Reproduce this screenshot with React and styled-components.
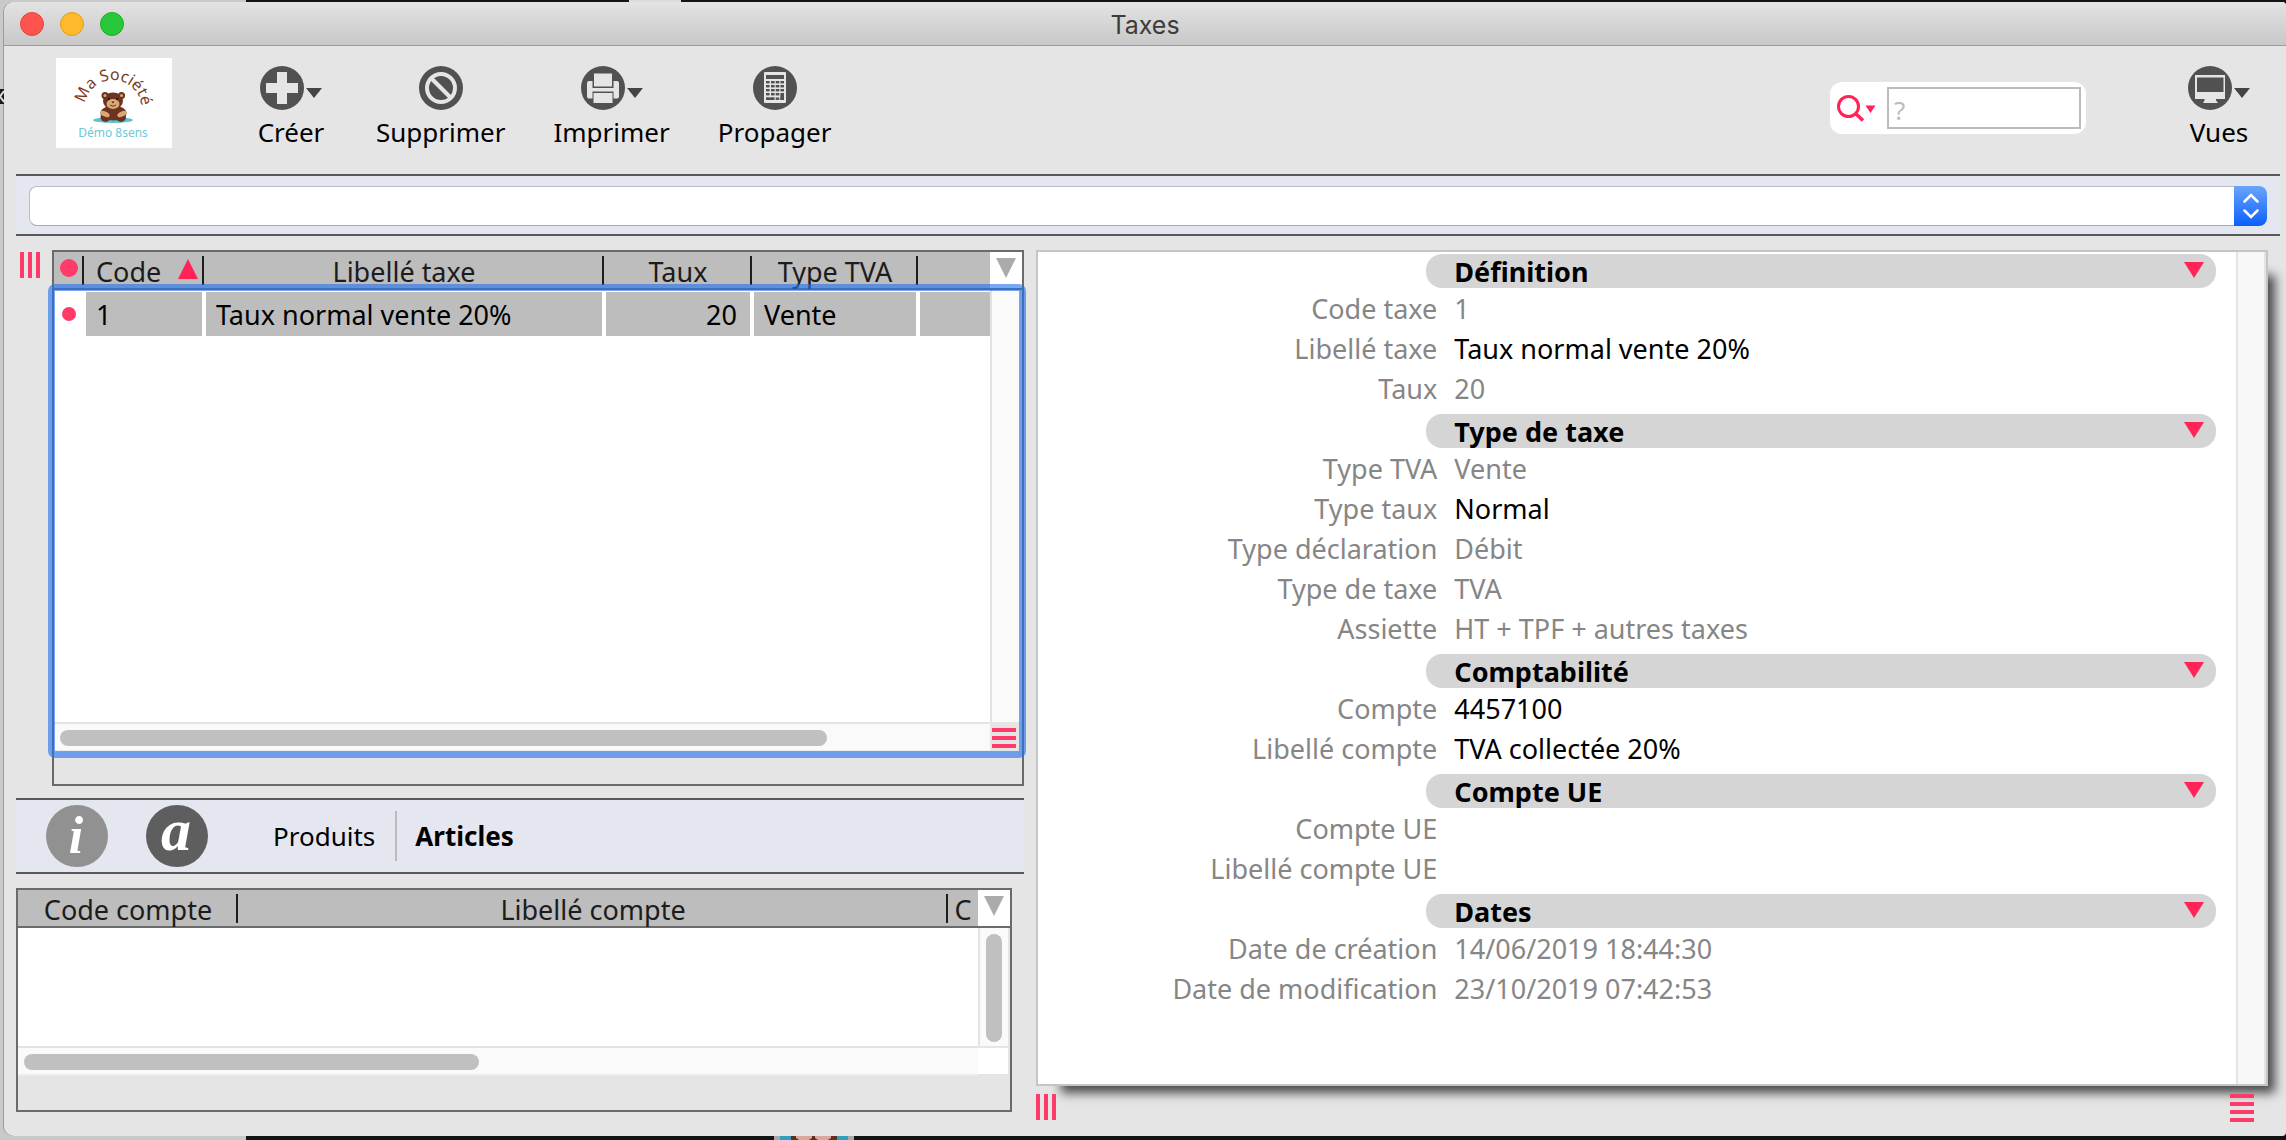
import React from "react";
import styled, { createGlobalStyle, css } from "styled-components";

const GlobalStyle = createGlobalStyle`
  * {
    box-sizing: border-box;
  }

  body {
    margin: 0;
    font-family: "Noto Sans", "Open Sans", sans-serif;
    font-size: 27px;
    line-height: 36px;
    color: #000;
  }

  button,
  input {
    font: inherit;
    color: inherit;
    padding: 0;
    border: 0;
    background: none;
  }
`;

const Desktop = styled.div`
  position: relative;
  display: flex;
  flex-direction: column;
  min-height: 100vh;
  padding: 2px 0 0 4px;
  background:
    linear-gradient(#dcdcdc, #dcdcdc) 629px 0 / 52px 2px no-repeat,
    linear-gradient(90deg, #c9c9c9 246px, #131215 246px);
`;

const DesktopArrow = styled.svg`
  position: absolute;
  left: 0;
  top: 89px;
`;

const DockPeek = styled.div`
  height: 4px;
  padding-left: 770px;

  svg {
    display: block;
  }
`;

const Window = styled.main`
  flex: 1;
  display: flex;
  flex-direction: column;
  border-radius: 10px 4px 4px 10px;
  background: #e5e5e5;
  box-shadow: -1px 0 0 #9c9c9c;
  overflow: hidden;
`;

const TitleBar = styled.header`
  display: grid;
  grid-template-columns: 1fr auto 1fr;
  align-items: center;
  height: 44px;
  padding: 0 16px;
  border-bottom: 1px solid #9d9d9d;
  background: linear-gradient(#e3e3e3, #c8c8c8);

  h1 {
    margin: 0;
    padding-top: 2px;
    font-family: Inter, sans-serif;
    font-size: 25px;
    line-height: 32px;
    font-weight: 400;
    color: #3c3c3c;
  }
`;

const Lights = styled.div`
  display: flex;
  gap: 16px;
`;

const Light = styled.button`
  width: 24px;
  height: 24px;
  border-radius: 50%;
  background: ${(p) => p.$color};
  border: 1px solid ${(p) => p.$edge};
`;

const Toolbar = styled.div`
  display: flex;
  align-items: flex-start;
  height: 128px;
  padding: 12px 30px 0 52px;
  font-size: 26px;
`;

const Actions = styled.nav`
  display: flex;
  gap: 48px;
  flex: 1;
  padding: 8px 0 0 82px;
`;

const ToolButton = styled.button`
  display: flex;
  flex-direction: column;
  align-items: center;
  gap: 4px;
  min-width: 74px;

  span {
    display: flex;
    align-items: center;
    gap: 2px;
  }
`;

const SearchBox = styled.div`
  display: flex;
  align-items: center;
  width: 256px;
  height: 52px;
  margin: 24px 96px 0 0;
  padding: 0 5px 0 7px;
  border-radius: 12px;
  background: #fff;

  button {
    width: 50px;
    line-height: 0;
    text-align: left;
  }

  input {
    flex: 1;
    min-width: 0;
    height: 42px;
    padding: 4px 5px 0;
    border: 2px solid #bcbcbc;
  }

  input::placeholder {
    color: #bcbcbc;
  }
`;

const VuesSlot = styled.div`
  padding-top: 8px;
`;

const Band = styled.div`
  display: flex;
  align-items: center;
  border-top: 2px solid #58585b;
  border-bottom: 2px solid #58585b;
  background: #e4e7ef;
`;

const FilterBand = styled(Band)`
  height: 62px;
  margin: 0 6px 0 12px;
  padding: 2px 13px 0;
`;

const Combo = styled.div`
  display: flex;
  flex: 1;
  height: 40px;

  input {
    flex: 1;
    min-width: 0;
    padding: 0 10px;
    border: 1px solid #b9bcc0;
    border-right: 0;
    border-bottom-color: #a3a6aa;
    border-radius: 8px 0 0 8px;
    background: #fff;
  }

  button {
    display: flex;
    align-items: center;
    justify-content: center;
    width: 33px;
    border-radius: 0 8px 8px 0;
    background: linear-gradient(#6aa5fb, #0a5fff);
  }
`;

const Columns = styled.div`
  flex: 1;
  display: grid;
  grid-template-columns: minmax(0, 45fr) minmax(0, 55fr);
  gap: 12px;
  padding: 14px 18px 0 12px;
`;

const LeftSide = styled.section`
  display: flex;
  flex-direction: column;
  padding-bottom: 24px;
`;

const MainListRow = styled.div`
  flex: 1;
  display: flex;
  align-items: stretch;
`;

const Gutter = styled.div`
  width: 36px;
  padding: 2px 0 0 4px;
`;

const Handle = styled.button`
  display: flex;
  flex-direction: ${(p) => (p.$rows ? "column" : "row")};
  gap: 4px;

  i {
    display: block;
    width: ${(p) => (p.$rows ? "24px" : "4px")};
    height: ${(p) => (p.$rows ? "4px" : "26px")};
    background: #ff3b69;
  }
`;

const ListFrame = styled.div`
  flex: 1;
  min-width: 0;
  display: flex;
  flex-direction: column;
  border: 2px solid #6b6b6b;
`;

const ListGrid = styled.div`
  position: relative;
  display: grid;
  grid-template-columns: minmax(0, 1fr) 32px;
  grid-template-rows: 38px minmax(0, 1fr) 30px;
  flex: 1;

  ${(p) =>
    p.$focused &&
    css`
      &::after {
        content: "";
        position: absolute;
        inset: 32px -4px -6px -6px;
        border: 7px solid rgba(37, 114, 237, 0.62);
        border-radius: 7px;
        pointer-events: none;
      }
    `}
`;

const TableArea = styled.div`
  grid-row: 1 / 3;
  background: #fff;
`;

const Table = styled.table`
  width: 100%;
  table-layout: fixed;
  border-spacing: 0;

  th {
    height: 38px;
    padding: 4px 0 0;
    border-bottom: 2px solid #6b6b6b;
    background:
      linear-gradient(#1d1d1d, #1d1d1d) right top 4px / 2px 29px no-repeat #bdbdbd;
    font-weight: 400;
    line-height: 32px;
    color: #1c1c1c;
    white-space: nowrap;
  }

  th:last-child {
    background: #bdbdbd;
  }

  td {
    height: 46px;
    padding: 2px 13px 0 10px;
    border: 0 solid #fff;
    border-width: 2px 2px 0;
    background: #bdbdbd;
    background-clip: padding-box;
    line-height: 42px;
    white-space: nowrap;
  }

  td:first-child {
    padding: 0;
    background: #fff;
    line-height: 0;
  }

  td:last-child {
    border-right: 0;
  }
`;

const NumberCell = styled.td`
  text-align: right;
`;

const SortHead = styled.span`
  display: flex;
  align-items: center;
  justify-content: space-between;
  padding: 0 6px 0 12px;

  svg {
    margin-bottom: 6px;
  }
`;

const Dot = styled.span`
  display: block;
  width: ${(p) => p.$size}px;
  height: ${(p) => p.$size}px;
  margin: 0 auto;
  border-radius: 50%;
  background: #ff3b69;

  th & {
    margin-bottom: 8px;
  }
`;

const HeadArrow = styled.button`
  display: flex;
  justify-content: center;
  padding-top: 6px;
  border-bottom: 2px solid #6b6b6b;
  background: #fff;
`;

const VTrack = styled.div`
  margin-right: 2px;
  padding: 6px 6px 4px;
  border-left: 2px solid #e3e3e3;
  background: #fafafa;
`;

const HTrack = styled.div`
  padding: 6px;
  border-top: 2px solid #e3e3e3;
  border-bottom: 2px solid #ececec;
  background: #fafafa;
`;

const VThumb = styled.div`
  width: 16px;
  height: 100%;
  border-radius: 8px;
  background: #c0c0c0;
`;

const HThumb = styled.div`
  width: ${(p) => p.$width};
  height: 16px;
  border-radius: 8px;
  background: #c0c0c0;
`;

const Corner = styled.div`
  margin: 2px 2px 2px 0;
  padding: 4px 2px;
  background: ${(p) => p.$bg};
`;

const ListFooter = styled.div`
  height: ${(p) => p.$height}px;
`;

const TabBand = styled(Band)`
  height: 76px;
  margin: 12px 0 14px;
  padding-left: 30px;
  font-size: 26px;
`;

const Round = styled.button`
  width: 62px;
  height: 62px;
  margin-right: 38px;
  line-height: 0;

  svg {
    overflow: visible;
  }
`;

const Tab = styled.button`
  height: 50px;
  padding: 0 20px 0 18px;
  font-weight: ${(p) => (p.$active ? 700 : 400)};

  & + & {
    border-left: 2px solid #bbbcc0;
  }
`;

const Tabs = styled.div`
  display: flex;
  padding-left: 9px;
`;

const SubList = styled(ListFrame)`
  flex: 0 0 224px;
  margin-right: 12px;
`;

const RightSide = styled.section`
  display: flex;
  flex-direction: column;
`;

const DetailPanel = styled.div`
  flex: 1;
  display: flex;
  border: 2px solid #c5c5c5;
  background: #fff;
  box-shadow: 16px 16px 10px -9px rgba(0, 0, 0, 0.68);
`;

const DetailBody = styled.div`
  flex: 1;
  padding-top: 2px;
`;

const DetailTrack = styled.div`
  width: 30px;
  border: 0 solid #e3e3e3;
  border-width: 0 2px;
  background: #f8f8f8;
`;

const Group = styled.section`
  & + & {
    margin-top: 6px;
  }

  dl {
    margin: 0;
  }
`;

const GroupBar = styled.button`
  display: flex;
  align-items: center;
  justify-content: space-between;
  width: calc(66.666% - 9px);
  height: 34px;
  margin-left: calc(33.333% - 11px);
  padding: 2px 12px 0 28px;
  border-radius: 16px;
  background: #d5d5d5;
  font-weight: 700;

  svg {
    margin-bottom: 4px;
  }
`;

const Field = styled.div`
  display: grid;
  grid-template-columns: minmax(0, 1fr) minmax(0, 2fr);
  line-height: 42px;
  height: 40px;

  dt {
    text-align: right;
    color: #868686;
  }

  dd {
    margin: 0;
    padding-left: 17px;
    color: ${(p) => (p.$strong ? "#000" : "#868686")};
  }
`;

const PanelFooter = styled.div`
  display: flex;
  justify-content: space-between;
  align-items: flex-start;
  height: 50px;
  padding: 8px 14px 0 0;
`;

const Triangle = ({ color, width = 20, height = 20, up }) => (
  <svg width={width} height={height} viewBox="0 0 20 20" preserveAspectRatio="none">
    <path d={up ? "M10 0 20 20H0Z" : "M0 0H20L10 20Z"} fill={color} />
  </svg>
);

const Disc = ({ children }) => (
  <svg width="44" height="44" viewBox="0 0 44 44">
    <circle cx="22" cy="22" r="22" fill="#515151" />
    {children}
  </svg>
);

const PlusIcon = () => (
  <Disc>
    <path d="M17 6h10v11h11v10H27v11H17V27H6V17h11Z" fill="#e5e5e5" />
  </Disc>
);

const ForbidIcon = () => (
  <Disc>
    <g fill="none" stroke="#e5e5e5">
      <circle cx="22" cy="22" r="14" strokeWidth="4" />
      <path d="M12 12 32 32" strokeWidth="4" />
    </g>
  </Disc>
);

const PrinterIcon = () => (
  <Disc>
    <path
      d="M6 17q0-2 2-2h3.500v7h21v-7H36q2 0 2 2v13.500q0 2-2 2h-3.500v-7h-21v7H8q-2 0-2-2Z"
      fill="#e5e5e5"
    />
    <path d="M13 7.500h18v13H13ZM12.500 27h19v10h-19Z" fill="#e5e5e5" />
  </Disc>
);

const CalculatorIcon = () => (
  <Disc>
    <rect x="11" y="6" width="22" height="31" rx="1" fill="#e5e5e5" />
    <rect x="13" y="9" width="18" height="4" fill="#515151" />
    {[15, 19, 23, 27, 31.5].map((y) =>
      [13, 18, 22.7, 27.4].map((x) => (
        <rect key={`${x}-${y}`} x={x} y={y} width="3.600" height="2.400" fill="#515151" />
      ))
    )}
    <path d="M13 31.500h8v2.500h-8ZM27.400 29h3.600v5h-3.600Z" fill="#515151" />
  </Disc>
);

const ScreenIcon = () => (
  <Disc>
    <path
      d="M7 9h30v24H28v1.500l2 2.500H15l1.500-2.500V33H7ZM9 11.500V26h26.500V11.500Z"
      fill="#e5e5e5"
      fillRule="evenodd"
    />
  </Disc>
);

const SearchIcon = () => (
  <svg width="39" height="28" viewBox="0 0 39 28" fill="none" stroke="#ff2357">
    <circle cx="11.500" cy="12.500" r="10" strokeWidth="3" />
    <path d="M18.500 19.500 26 26.500" strokeWidth="3.500" />
    <path d="M28.500 11.500h10l-5 7.500Z" fill="#ff2357" stroke="none" />
  </svg>
);

const StepIcon = () => (
  <svg width="16" height="26" viewBox="0 0 16 26" fill="none" stroke="#fff" strokeWidth="2.500">
    <path d="M1.500 8.500 8 2l6.500 6.500M1.500 17.500 8 24l6.500-6.500" strokeLinecap="round" />
  </svg>
);

const LetterIcon = ({ letter, color, size, baseline }) => (
  <svg width="62" height="62" viewBox="0 0 62 62">
    <circle cx="31" cy="31" r="31" fill={color} />
    <text
      x="30"
      y={baseline}
      textAnchor="middle"
      fill="#fff"
      fontFamily="Liberation Serif, serif"
      fontStyle="italic"
      fontWeight="700"
      fontSize={size}
    >
      {letter}
    </text>
  </svg>
);

const Logo = () => (
  <svg width="116" height="90" viewBox="0 0 116 90">
    <rect width="116" height="90" fill="#fff" />
    <path id="logo-arc" d="M28.500 50.500a28.500 28.500 0 0 1 57 0v6" fill="none" />
    <text fontSize="16" fill="#7a3b22">
      <textPath href="#logo-arc" startOffset="5">
        Ma Société
      </textPath>
    </text>
    <ellipse cx="57" cy="62" rx="20" ry="3" fill="#5cc3d3" />
    <g fill="#6b3320">
      <circle cx="49" cy="37.500" r="3.500" />
      <circle cx="65.500" cy="37.500" r="3.500" />
      <ellipse cx="57" cy="43" rx="10" ry="8.500" />
      <ellipse cx="57.500" cy="55" rx="13" ry="7.500" />
      <circle cx="49.500" cy="59" r="5" />
      <circle cx="65" cy="59" r="5" />
    </g>
    <g fill="#dba877">
      <circle cx="49" cy="37.500" r="1.500" />
      <circle cx="65.500" cy="37.500" r="1.500" />
      <ellipse cx="57" cy="46" rx="6.500" ry="5" />
      <ellipse cx="49" cy="56" rx="5" ry="2.500" transform="rotate(25 49 56)" />
      <ellipse cx="66" cy="56" rx="5" ry="2.500" transform="rotate(-25 66 56)" />
    </g>
    <circle cx="53" cy="41" r="1" fill="#1c0d08" />
    <circle cx="61" cy="41" r="1" fill="#1c0d08" />
    <path d="M55.500 43.500h3L57 45.500Z" fill="#4a1f10" />
    <path d="M54 47q3 2.500 6 0" fill="none" stroke="#4a1f10" strokeWidth=".8" />
    <text x="57" y="79" textAnchor="middle" fontSize="12" fill="#6cc9d6">
      Démo 8sens
    </text>
  </svg>
);

const lights = [
  { name: "Fermer", color: "#ff544d", edge: "#e2463f" },
  { name: "Réduire", color: "#ffb92b", edge: "#e09e22" },
  { name: "Agrandir", color: "#28c83b", edge: "#1dad2b" },
];

const actions = [
  { label: "Créer", Icon: PlusIcon, menu: true },
  { label: "Supprimer", Icon: ForbidIcon },
  { label: "Imprimer", Icon: PrinterIcon, menu: true },
  { label: "Propager", Icon: CalculatorIcon },
];

const groups = [
  {
    title: "Définition",
    fields: [
      ["Code taxe", "1"],
      ["Libellé taxe", "Taux normal vente 20%", true],
      ["Taux", "20"],
    ],
  },
  {
    title: "Type de taxe",
    fields: [
      ["Type TVA", "Vente"],
      ["Type taux", "Normal", true],
      ["Type déclaration", "Débit"],
      ["Type de taxe", "TVA"],
      ["Assiette", "HT + TPF + autres taxes"],
    ],
  },
  {
    title: "Comptabilité",
    fields: [
      ["Compte", "4457100", true],
      ["Libellé compte", "TVA collectée 20%", true],
    ],
  },
  {
    title: "Compte UE",
    fields: [
      ["Compte UE", ""],
      ["Libellé compte UE", ""],
    ],
  },
  {
    title: "Dates",
    fields: [
      ["Date de création", "14/06/2019 18:44:30"],
      ["Date de modification", "23/10/2019 07:42:53"],
    ],
  },
];

const Tool = ({ label, Icon, menu }) => (
  <ToolButton type="button">
    <span>
      <Icon />
      {menu && (
        <svg width="16" height="20" viewBox="0 0 16 20">
          <path d="M0 10h16L8 20Z" fill="#444" />
        </svg>
      )}
    </span>
    {label}
  </ToolButton>
);

const Grip = ({ count = 3, rows, label }) => (
  <Handle type="button" $rows={rows} aria-label={label}>
    {Array.from({ length: count }, (_, i) => (
      <i key={i} />
    ))}
  </Handle>
);

const TaxList = () => (
  <ListFrame>
    <ListGrid $focused>
      <TableArea>
        <Table>
          <colgroup>
            <col width="30" />
            <col width="120" />
            <col width="400" />
            <col width="148" />
            <col width="166" />
            <col />
          </colgroup>
          <thead>
            <tr>
              <th>
                <Dot $size={18} />
              </th>
              <th>
                <SortHead>
                  Code
                  <Triangle color="#ff2357" up />
                </SortHead>
              </th>
              <th>Libellé taxe</th>
              <th>Taux</th>
              <th>Type TVA</th>
              <th />
            </tr>
          </thead>
          <tbody>
            <tr>
              <td>
                <Dot $size={14} />
              </td>
              <td>1</td>
              <td>Taux normal vente 20%</td>
              <NumberCell>20</NumberCell>
              <td>Vente</td>
              <td />
            </tr>
          </tbody>
        </Table>
      </TableArea>
      <HeadArrow type="button" aria-label="Colonnes">
        <Triangle color="#ababab" />
      </HeadArrow>
      <VTrack />
      <HTrack>
        <HThumb $width="83%" />
      </HTrack>
      <Corner $bg="#e5e5e5">
        <Grip rows label="Redimensionner la liste" />
      </Corner>
    </ListGrid>
    <ListFooter $height={32} />
  </ListFrame>
);

const AccountList = () => (
  <SubList>
    <ListGrid>
      <TableArea>
        <Table>
          <colgroup>
            <col width="220" />
            <col />
            <col width="30" />
          </colgroup>
          <thead>
            <tr>
              <th>Code compte</th>
              <th>Libellé compte</th>
              <th>C</th>
            </tr>
          </thead>
        </Table>
      </TableArea>
      <HeadArrow type="button" aria-label="Colonnes">
        <Triangle color="#ababab" />
      </HeadArrow>
      <VTrack>
        <VThumb />
      </VTrack>
      <HTrack>
        <HThumb $width="48%" />
      </HTrack>
      <Corner $bg="#fff" />
    </ListGrid>
    <ListFooter $height={34} />
  </SubList>
);

const Details = () => (
  <RightSide>
    <DetailPanel>
      <DetailBody>
        {groups.map((group) => (
          <Group key={group.title}>
            <GroupBar type="button">
              {group.title}
              <Triangle color="#ff2357" height={16} />
            </GroupBar>
            <dl>
              {group.fields.map(([label, value, strong]) => (
                <Field key={label} $strong={strong}>
                  <dt>{label}</dt>
                  <dd>{value}</dd>
                </Field>
              ))}
            </dl>
          </Group>
        ))}
      </DetailBody>
      <DetailTrack />
    </DetailPanel>
    <PanelFooter>
      <Grip label="Redimensionner les colonnes" />
      <Grip rows count={4} label="Redimensionner la fiche" />
    </PanelFooter>
  </RightSide>
);

const App = () => {
  return (
    <Desktop>
      <GlobalStyle />
      <DesktopArrow width="4" height="15" viewBox="0 0 4 15">
        <rect width="4" height="15" fill="#1b1b1b" />
        <path d="M4 2 0 7.500 4 13" fill="none" stroke="#ddd" strokeWidth="2" />
      </DesktopArrow>
      <Window>
        <TitleBar>
          <Lights>
            {lights.map((l) => (
              <Light key={l.name} type="button" aria-label={l.name} $color={l.color} $edge={l.edge} />
            ))}
          </Lights>
          <h1>Taxes</h1>
        </TitleBar>
        <Toolbar>
          <Logo />
          <Actions>
            {actions.map((action) => (
              <Tool key={action.label} {...action} />
            ))}
          </Actions>
          <SearchBox>
            <button type="button" aria-label="Critères de recherche">
              <SearchIcon />
            </button>
            <input type="text" placeholder="?" aria-label="Rechercher" />
          </SearchBox>
          <VuesSlot>
            <Tool label="Vues" Icon={ScreenIcon} menu />
          </VuesSlot>
        </Toolbar>
        <FilterBand>
          <Combo>
            <input type="text" aria-label="Filtre" />
            <button type="button" aria-label="Choisir un filtre">
              <StepIcon />
            </button>
          </Combo>
        </FilterBand>
        <Columns>
          <LeftSide>
            <MainListRow>
              <Gutter>
                <Grip label="Déplacer la liste" />
              </Gutter>
              <TaxList />
            </MainListRow>
            <TabBand>
              <Round type="button" aria-label="Informations">
                <LetterIcon letter="i" color="#919191" size={52} baseline={48} />
              </Round>
              <Round type="button" aria-label="Articles liés">
                <LetterIcon letter="a" color="#5e5e5e" size={60} baseline={45} />
              </Round>
              <Tabs>
                <Tab type="button">Produits</Tab>
                <Tab type="button" $active>
                  Articles
                </Tab>
              </Tabs>
            </TabBand>
            <AccountList />
          </LeftSide>
          <Details />
        </Columns>
      </Window>
      <DockPeek>
        <svg width="80" height="4" viewBox="0 0 80 4">
          <rect width="80" height="4" fill="#a9a9a9" />
          <rect x="6" width="68" height="4" fill="#2f9fbd" />
          <rect x="17" width="46" height="4" fill="#5e3018" />
          <path d="M22 0h16v2l-3 2H25l-3-2ZM41 0h16v2l-3 2H44l-3-2Z" fill="#d9a79c" />
        </svg>
      </DockPeek>
    </Desktop>
  );
};

export default App;
